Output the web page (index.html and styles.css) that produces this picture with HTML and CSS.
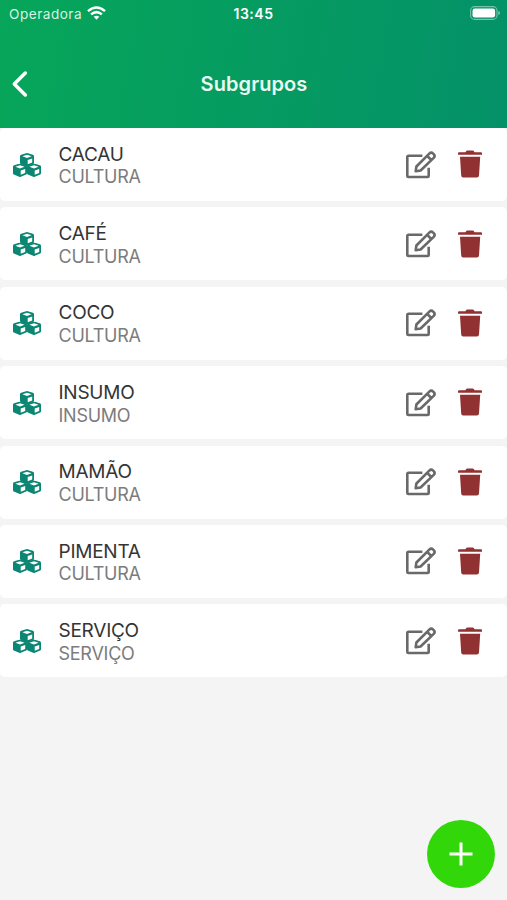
FILE: index.html
```html
<!DOCTYPE html>
<html lang="pt-BR">
<head>
<meta charset="utf-8">
<title>Subgrupos</title>
<link rel="stylesheet" href="styles.css">
</head>
<body>
<svg class="defs" aria-hidden="true">
  <symbol id="cube" viewBox="0 0 14 13.4">
    <path fill="#0b8672" d="M7 0 12.9 1.8Q14 2.2 14 3.3V9.8Q14 10.7 13.2 11L7.8 13.2Q7 13.6 6.2 13.2L.8 11Q0 10.7 0 9.8V3.3Q0 2.2 1.1 1.8Z"/>
    <path fill="#fff" d="M7 1.7 11.6 3.2 7 4.9 2.4 3.2ZM7.7 7.1 12.2 5.4V9.4L7.7 11.2Z"/>
  </symbol>
  <symbol id="cubes" viewBox="0 0 28 24">
    <use href="#cube" x="7" y="0" width="14" height="13.4"/>
    <use href="#cube" x="0" y="10.5" width="14" height="13.4"/>
    <use href="#cube" x="14" y="10.5" width="14" height="13.4"/>
  </symbol>
  <symbol id="edit" viewBox="0 0 32 30">
    <g fill="none" stroke="#696969" stroke-width="2.6" stroke-linejoin="round">
      <path d="M17.4 5.8H3.4Q2.3 5.8 2.3 6.9V25.9Q2.3 27 3.4 27H22.6Q23.7 27 23.7 25.9V17.7"/>
      <path d="M10.7 21.2 11.4 16.5 24.3 3.6Q26.2 1.7 28.1 3.6L28.7 4.2Q30.5 6 28.7 7.9L15.6 20.5ZM22 5.8 26.6 10.2"/>
    </g>
  </symbol>
  <symbol id="trash" viewBox="0 0 24 28">
    <path fill="#913131" d="M1 2.3H7.4L8.3.9Q8.6.4 9.2.4H14.8Q15.4.4 15.7.9L16.6 2.3H23Q24 2.3 24 3.3V4.8H0V3.3Q0 2.3 1 2.3ZM2 6.7H22.2L21 25.6Q20.9 27.6 18.9 27.6H5.2Q3.3 27.6 3.2 25.6Z"/>
  </symbol>
</svg>
<div class="screen">
  <header class="header">
    <div class="status">
      <div class="carrier">
        <span>Operadora</span>
        <svg class="wifi" viewBox="0 0 19 14"><g fill="none" stroke="#fff" stroke-width="2.5"><path d="M1 5.1Q9.5-2.2 18 5.1"/><path d="M4.1 8.4Q9.5 3.8 14.9 8.4"/></g><path fill="#fff" d="M6.7 10.8Q9.5 8.7 12.3 10.8L9.5 13.7Z"/></svg>
      </div>
      <span class="clock">13:45</span>
      <svg class="battery" viewBox="0 0 31 15"><rect x=".6" y=".6" width="26.4" height="12.8" rx="4" fill="none" stroke="#fff" stroke-opacity=".45" stroke-width="1.1"/><rect x="2.5" y="2.5" width="22.6" height="9" rx="2.3" fill="#fff"/><path fill="#fff" fill-opacity=".5" d="M28.3 5Q30 5.5 30 7T28.3 9Z"/></svg>
    </div>
    <div class="nav">
      <svg class="back" viewBox="0 0 18 28"><path d="M14.3 3 3.3 14 14.3 25" fill="none" stroke="#fff" stroke-width="3.5" stroke-linecap="round" stroke-linejoin="round"/></svg>
      <h1 class="title">Subgrupos</h1>
    </div>
  </header>
  <main class="list">
    <article class="card"><svg class="cubes"><use href="#cubes"/></svg><div class="text"><div class="name">CACAU</div><div class="kind">CULTURA</div></div><svg class="edit"><use href="#edit"/></svg><svg class="trash"><use href="#trash"/></svg></article>
    <article class="card"><svg class="cubes"><use href="#cubes"/></svg><div class="text"><div class="name">CAFÉ</div><div class="kind">CULTURA</div></div><svg class="edit"><use href="#edit"/></svg><svg class="trash"><use href="#trash"/></svg></article>
    <article class="card"><svg class="cubes"><use href="#cubes"/></svg><div class="text"><div class="name">COCO</div><div class="kind">CULTURA</div></div><svg class="edit"><use href="#edit"/></svg><svg class="trash"><use href="#trash"/></svg></article>
    <article class="card"><svg class="cubes"><use href="#cubes"/></svg><div class="text"><div class="name">INSUMO</div><div class="kind">INSUMO</div></div><svg class="edit"><use href="#edit"/></svg><svg class="trash"><use href="#trash"/></svg></article>
    <article class="card"><svg class="cubes"><use href="#cubes"/></svg><div class="text"><div class="name">MAMÃO</div><div class="kind">CULTURA</div></div><svg class="edit"><use href="#edit"/></svg><svg class="trash"><use href="#trash"/></svg></article>
    <article class="card"><svg class="cubes"><use href="#cubes"/></svg><div class="text"><div class="name">PIMENTA</div><div class="kind">CULTURA</div></div><svg class="edit"><use href="#edit"/></svg><svg class="trash"><use href="#trash"/></svg></article>
    <article class="card"><svg class="cubes"><use href="#cubes"/></svg><div class="text"><div class="name">SERVIÇO</div><div class="kind">SERVIÇO</div></div><svg class="edit"><use href="#edit"/></svg><svg class="trash"><use href="#trash"/></svg></article>
  </main>
  <button class="add" aria-label="Adicionar"><svg viewBox="0 0 24 24"><path d="M12 .5V23.5M.5 12H23.5" stroke="#fff" stroke-width="3"/></svg></button>
</div>
</body>
</html>
```
FILE: styles.css
```css
* { box-sizing: border-box; }
body { margin: 0; font-family: Inter, "Liberation Sans", sans-serif; background: #f4f4f4; }
.defs { position: absolute; width: 0; height: 0; }
.screen { position: relative; height: 900px; overflow: hidden; }
.header {
  height: 127.5px;
  color: #fff;
  background: linear-gradient(100deg, #07a65a, #049168);
}
.status {
  display: grid;
  grid-template-columns: 1fr auto 1fr;
  align-items: center;
  height: 28px;
  padding: 0 6px 0 9px;
  font-size: 13.4px;
}
.carrier { display: flex; align-items: center; gap: 5px; font-size: 13.6px; letter-spacing: .5px; color: #d5f2e3; }
.wifi { width: 19px; height: 14px; margin-top: -2px; }
.clock { font-weight: 600; font-size: 14px; letter-spacing: .5px; margin: -1px 0 0 -3px; }
.battery { width: 31px; height: 15px; justify-self: end; margin-top: -1px; }
.nav {
  display: grid;
  grid-template-columns: 40px 1fr 40px;
  align-items: center;
  height: 112px;
}
.back { width: 18px; height: 28px; margin-left: 11px; }
.title { margin: 0; text-align: center; font-size: 20px; font-weight: 600; letter-spacing: .08px; padding-left: 1px; color: #e9faf2; }
.list { display: flex; flex-direction: column; gap: 6.4px; padding-top: .5px; }
.card {
  display: flex;
  align-items: center;
  height: 73px;
  padding: 0 25px 0 13px;
  background: #fff;
  border-radius: 5px;
}
.cubes { width: 28px; height: 24px; margin-right: 17.5px; }
.text { flex: 1; margin-top: 3.8px; }
.name, .kind { font-size: 19px; line-height: 22.8px; letter-spacing: -.25px; color: #343434; }
.kind { font-size: 18px; letter-spacing: -.25px; color: #7c7c7c; }
.edit { width: 32px; height: 30px; margin-right: 21px; }
.trash { width: 24px; height: 28px; margin-top: -.5px; }
.add {
  position: absolute;
  left: 427px;
  top: 820px;
  width: 68px;
  height: 68px;
  padding: 0;
  border: 0;
  border-radius: 50%;
  background: #31d708;
  display: grid;
  place-items: center;
}
.add svg { width: 24px; height: 24px; }
```
